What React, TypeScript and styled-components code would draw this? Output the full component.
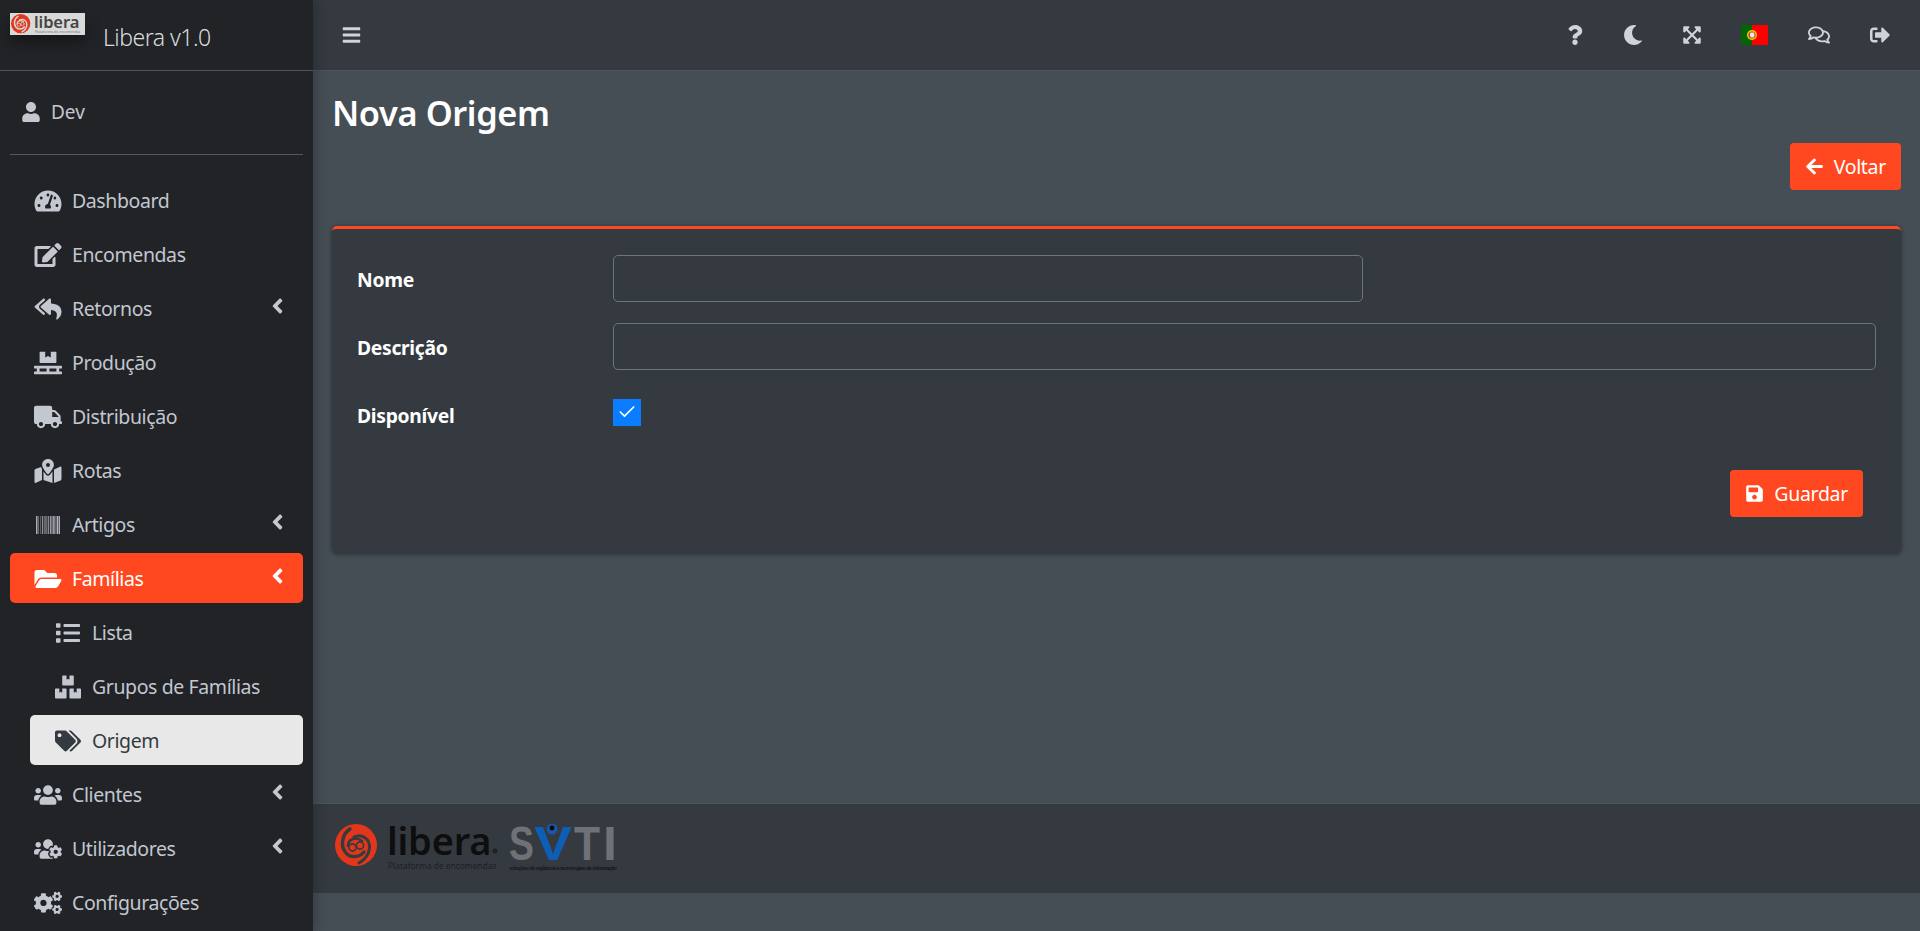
import styled, { createGlobalStyle } from "styled-components"
import type { ReactNode } from "react"
import {
    FaAngleLeft, FaArrowLeft, FaBarcode, FaBars, FaBoxes, FaCogs, FaEdit, FaExpandArrowsAlt,
    FaFolderOpen, FaList, FaMapMarkedAlt, FaMoon, FaPallet, FaQuestion, FaRegComments, FaReplyAll,
    FaSave, FaSignOutAlt, FaTachometerAlt, FaTags, FaTruck, FaUser, FaUsers, FaUsersCog,
} from "react-icons/fa"
import { LuCheck } from "react-icons/lu"

const orange = "#ff4820"
const panel = "#343a40"
const font = `"Noto Sans", "Open Sans", "Liberation Sans", sans-serif`

const GlobalStyle = createGlobalStyle`
    html, body {
        margin: 0;
        height: 100%;
        overflow: hidden;
        background: #454d55;
    }
    body {
        font-family: ${font};
        font-size: 19.5px;
        color: #fff;
    }
    * {
        box-sizing: border-box;
    }
`

const Page = styled.div`
    display: flex;
    width: 1920px;
    height: 931px;
`

const Sidebar = styled.aside`
    width: 313px;
    flex-shrink: 0;
    display: flex;
    flex-direction: column;
    background: #212327;
    box-shadow: 0 0 14px rgba(0, 0, 0, 0.3);
    position: relative;
    z-index: 2;
`

const Brand = styled.div`
    height: 71px;
    flex-shrink: 0;
    display: flex;
    border-bottom: 1px solid #4b545c;
    padding: 13px 0 0 10px;
`

const BrandLogo = styled.div`
    width: 75px;
    height: 22px;
    background: #d9d9d9;
    box-shadow: 0 8px 14px rgba(0, 0, 0, 0.35);
    display: flex;
    align-items: flex-start;
    overflow: hidden;
`

const BrandName = styled.span`
    margin: 9px 0 0 18px;
    font-size: 23px;
    font-weight: 300;
    line-height: 30px;
    letter-spacing: -0.5px;
    color: rgba(255, 255, 255, 0.85);
`

const UserPanel = styled.div`
    height: 84px;
    margin: 0 10px;
    display: flex;
    align-items: center;
    gap: 11px;
    padding: 0 0 1px 12px;
    border-bottom: 1px solid #4f5962;
    color: #c2c7d0;
    font-size: 19px;

    svg {
        width: 18px;
        height: 20px;
    }
`

const Nav = styled.nav`
    display: flex;
    flex-direction: column;
    gap: 4px;
    padding: 20px 10px 0;
`

const NavItem = styled.a<{ $state?: "open" | "current"; $sub?: boolean }>`
    height: 50px;
    display: flex;
    align-items: center;
    border-radius: 5px;
    margin-left: ${(p) => (p.$sub ? "20px" : "0")};
    padding-left: ${(p) => (p.$sub ? "25px" : "24px")};
    color: ${(p) => (p.$state === "open" ? "#fff" : p.$state === "current" ? panel : "#c2c7d0")};
    background: ${(p) => (p.$state === "open" ? orange : p.$state === "current" ? "#e8e8e8" : "transparent")};
    font-size: 19.5px;
    letter-spacing: -0.4px;
`

const NavIcon = styled.span<{ $sub?: boolean }>`
    width: ${(p) => (p.$sub ? "37px" : "38px")};
    padding-top: 2px;
    display: flex;
    flex-shrink: 0;

    svg {
        width: ${(p) => (p.$sub ? "26px" : "28px")};
        height: 24px;
    }
`

const NavLabel = styled.span`
    flex: 1;
    padding-top: 2px;
    line-height: 24px;
`

const NavArrow = styled(FaAngleLeft)`
    width: 17px;
    height: 24px;
    margin: -4px 17px 0 0;
`

const Main = styled.div`
    flex: 1;
    min-width: 0;
    display: flex;
    flex-direction: column;
`

const TopBar = styled.header`
    height: 71px;
    flex-shrink: 0;
    display: flex;
    align-items: center;
    justify-content: space-between;
    padding: 0 10px 0 29px;
    background: ${panel};
    border-bottom: 1px solid #4b545c;
    color: #d0d3d8;
`

const MenuToggle = styled.a`
    display: flex;

    svg {
        width: 19px;
        height: 20px;
    }
`

const TopLinks = styled.div`
    display: flex;
    align-items: center;
`

const TopLink = styled.a<{ $size?: number; $right?: number }>`
    display: flex;
    align-items: center;
    padding: 0 ${(p) => p.$right ?? 20}px 0 20px;

    svg {
        height: ${(p) => p.$size ?? 20}px;
        width: auto;
    }
`

const Content = styled.main`
    flex: 1;
    padding: 19px 19px 0 19px;
`

const Title = styled.h1`
    margin: 0;
    font-size: 34.4px;
    line-height: 46px;
    font-weight: 600;
    letter-spacing: -0.4px;
`

const BackRow = styled.div`
    display: flex;
    justify-content: flex-end;
    margin-top: 7px;
`

const Button = styled.button`
    height: 47px;
    display: inline-flex;
    align-items: center;
    gap: 10px;
    padding: 0 15px;
    border: 0;
    border-radius: 4px;
    background: ${orange};
    color: #fff;
    font-family: ${font};
    font-size: 19.5px;
    letter-spacing: -0.3px;

    svg {
        width: 19px;
        height: 19px;
    }
`

const Card = styled.section`
    margin-top: 36px;
    height: 327px;
    padding: 26px 25px 0 25px;
    background: ${panel};
    border-top: 3px solid ${orange};
    border-radius: 5px;
    box-shadow: 0 0 4px rgba(0, 0, 0, 0.25), 0 2px 4px rgba(0, 0, 0, 0.2);
    display: flex;
    flex-direction: column;
`

const FormRow = styled.div`
    display: flex;
    align-items: center;
    min-height: 47px;
    margin-bottom: 21px;
`

const FieldLabel = styled.label`
    width: 256px;
    padding-top: 2px;
    flex-shrink: 0;
    font-weight: 700;
    font-size: 19.3px;
    letter-spacing: -0.3px;
`

const TextInput = styled.input<{ $narrow?: boolean }>`
    width: ${(p) => (p.$narrow ? "750px" : "100%")};
    height: 47px;
    padding: 0 14px;
    background: ${panel};
    border: 1px solid #6c757d;
    border-radius: 5px;
    color: #fff;
    font-family: ${font};
    font-size: 18px;
    outline: none;
`

const CheckBox = styled.span`
    width: 28px;
    height: 27px;
    display: flex;
    align-items: center;
    justify-content: center;
    background: #0a7cff;
    margin-top: -5px;

    svg {
        width: 20px;
        height: 20px;
    }
`

const FormActions = styled.div`
    display: flex;
    justify-content: flex-end;
    margin: 11px 13px 0 0;
`

const Footer = styled.footer`
    height: 90px;
    flex-shrink: 0;
    margin-bottom: 38px;
    display: flex;
    align-items: center;
    gap: 10px;
    padding: 0 0 0 22px;
    background: ${panel};
    border-top: 1px solid #4b545c;
`

const SwirlMark = ({ cut }: { cut: string }) => (
    <g fill="none" stroke={cut} strokeLinecap="round">
        <circle cx="21" cy="21" r="21" fill="#e2371a" stroke="none" />
        <path d="M15 5C7 10 5 22 11 29C15 34 24 34 29 28" strokeWidth="3.4" />
        <path d="M19 13C27 9 35 15 34.5 24C34 31 29 36 24 39" strokeWidth="3" />
        <path d="M13 22C13 15 21 12 27 17" strokeWidth="2.6" />
        <circle cx="17.5" cy="23.5" r="3.6" fill="#e2371a" strokeWidth="1.6" />
        <circle cx="25" cy="21.5" r="3.6" fill="#e2371a" strokeWidth="1.6" />
    </g>
)

const BrandMark = () => (
    <svg width="75" height="22" viewBox="0 0 75 22">
        <g transform="translate(1 1) scale(0.46)">
            <SwirlMark cut="#d9d9d9" />
        </g>
        <text x="24" y="14.5" fontFamily="Noto Sans, sans-serif" fontSize="16.5" fontWeight="600" fill="#444" letterSpacing="-0.1">
            libera
        </text>
        <text x="25" y="20" fontFamily="Noto Sans, sans-serif" fontSize="3.5" fill="#777">
            Plataforma de encomendas
        </text>
    </svg>
)

const LiberaLogo = () => (
    <svg width="164" height="52" viewBox="0 0 164 52">
        <g transform="translate(0 1)">
            <SwirlMark cut="#343a40" />
        </g>
        <text x="52" y="32" fontFamily="Noto Sans, sans-serif" fontSize="38" fontWeight="600" fill="#0e0e0e" letterSpacing="-0.2">
            libera
        </text>
        <circle cx="160" cy="28" r="2.5" fill="#222" />
        <text x="53" y="46" fontFamily="Noto Sans, sans-serif" fontSize="8.4" fill="#1b1f22">
            Plataforma de encomendas
        </text>
    </svg>
)

const SvtiLogo = () => (
    <svg width="112" height="52" viewBox="0 0 112 52">
        <g fontFamily="Liberation Sans, sans-serif" fontWeight="700">
            <text x="0" y="37" fontSize="48" fill="#6e7175" textLength="25" lengthAdjust="spacingAndGlyphs">
                S
            </text>
            <text x="65" y="37" fontSize="48" fill="#6e7175" textLength="26" lengthAdjust="spacingAndGlyphs">
                T
            </text>
            <text x="94" y="37" fontSize="48" fill="#6e7175" textLength="14" lengthAdjust="spacingAndGlyphs">
                I
            </text>
            <text x="25" y="37" fontSize="48" fill="#0f5eb5" textLength="38" lengthAdjust="spacingAndGlyphs">
                V
            </text>
        </g>
        <circle cx="43" cy="6" r="5.5" fill="#1a55a8" />
        <circle cx="43" cy="5" r="2.4" fill="#0a0a0a" />
        <text x="0" y="47" fontFamily="Liberation Sans, sans-serif" fontSize="5.2" fontWeight="700" fill="#14171a" textLength="108">
            soluções de vigilância e tecnologias de informação
        </text>
    </svg>
)

const PortugalFlag = () => (
    <svg width="27" height="20" viewBox="0 0 27 20">
        <rect width="27" height="20" fill="#ff0000" />
        <rect width="11" height="20" fill="#006600" />
        <circle cx="11" cy="10" r="5" fill="#f5d000" />
        <circle cx="11" cy="10" r="3.6" fill="#c8401a" />
        <rect x="9" y="7.5" width="4.4" height="5" rx="1.4" fill="#e8e8e8" />
    </svg>
)

type MenuItem = {
    label: string
    icon: ReactNode
    arrow?: boolean
    sub?: boolean
    state?: "open" | "current"
}

const menu: MenuItem[] = [
    { label: "Dashboard", icon: <FaTachometerAlt /> },
    { label: "Encomendas", icon: <FaEdit /> },
    { label: "Retornos", icon: <FaReplyAll />, arrow: true },
    { label: "Produção", icon: <FaPallet /> },
    { label: "Distribuição", icon: <FaTruck /> },
    { label: "Rotas", icon: <FaMapMarkedAlt /> },
    { label: "Artigos", icon: <FaBarcode />, arrow: true },
    { label: "Famílias", icon: <FaFolderOpen />, arrow: true, state: "open" },
    { label: "Lista", icon: <FaList />, sub: true },
    { label: "Grupos de Famílias", icon: <FaBoxes />, sub: true },
    { label: "Origem", icon: <FaTags />, sub: true, state: "current" },
    { label: "Clientes", icon: <FaUsers />, arrow: true },
    { label: "Utilizadores", icon: <FaUsersCog />, arrow: true },
    { label: "Configurações", icon: <FaCogs /> },
]

const App = () => {
    return (
        <Page>
            <GlobalStyle />
            <Sidebar>
                <Brand>
                    <BrandLogo>
                        <BrandMark />
                    </BrandLogo>
                    <BrandName>Libera v1.0</BrandName>
                </Brand>
                <UserPanel>
                    <FaUser />
                    Dev
                </UserPanel>
                <Nav>
                    {menu.map((item) => (
                        <NavItem key={item.label} $state={item.state} $sub={item.sub}>
                            <NavIcon $sub={item.sub}>{item.icon}</NavIcon>
                            <NavLabel>{item.label}</NavLabel>
                            {item.arrow && <NavArrow />}
                        </NavItem>
                    ))}
                </Nav>
            </Sidebar>
            <Main>
                <TopBar>
                    <MenuToggle>
                        <FaBars />
                    </MenuToggle>
                    <TopLinks>
                        <TopLink $right={18}><FaQuestion /></TopLink>
                        <TopLink $right={19}><FaMoon /></TopLink>
                        <TopLink $right={19}><FaExpandArrowsAlt /></TopLink>
                        <TopLink><PortugalFlag /></TopLink>
                        <TopLink $size={22}><FaRegComments /></TopLink>
                        <TopLink><FaSignOutAlt /></TopLink>
                    </TopLinks>
                </TopBar>
                <Content>
                    <Title>Nova Origem</Title>
                    <BackRow>
                        <Button><FaArrowLeft /> Voltar</Button>
                    </BackRow>
                    <Card>
                        <FormRow>
                            <FieldLabel>Nome</FieldLabel>
                            <TextInput $narrow />
                        </FormRow>
                        <FormRow>
                            <FieldLabel>Descrição</FieldLabel>
                            <TextInput />
                        </FormRow>
                        <FormRow>
                            <FieldLabel>Disponível</FieldLabel>
                            <CheckBox><LuCheck color="#fff" /></CheckBox>
                        </FormRow>
                        <FormActions>
                            <Button><FaSave /> Guardar</Button>
                        </FormActions>
                    </Card>
                </Content>
                <Footer>
                    <LiberaLogo />
                    <SvtiLogo />
                </Footer>
            </Main>
        </Page>
    )
}

export default App
